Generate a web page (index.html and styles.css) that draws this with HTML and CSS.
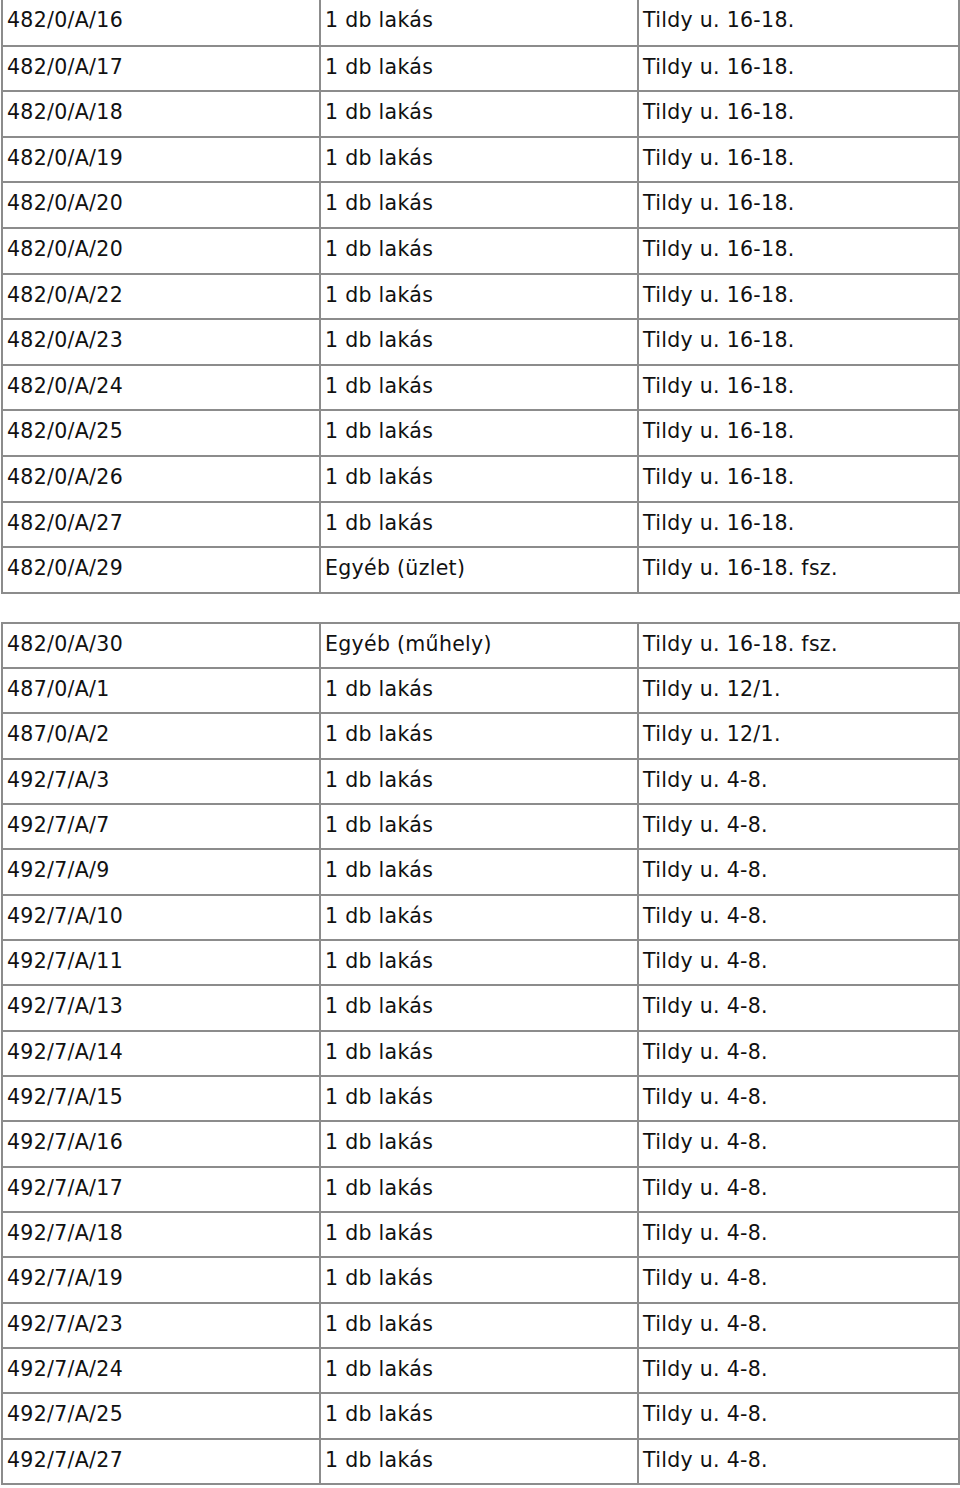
FILE: index.html
```html
<!DOCTYPE html>
<html lang="hu">
<head>
<meta charset="utf-8">
<title>Ingatlanok</title>
<link rel="stylesheet" href="styles.css">
</head>
<body>
<table class="list first">
<colgroup><col class="c1"><col class="c2"><col class="c3"></colgroup>
<tbody>
<tr><td>482/0/A/16</td><td>1 db lakás</td><td>Tildy u. 16-18.</td></tr>
<tr><td>482/0/A/17</td><td>1 db lakás</td><td>Tildy u. 16-18.</td></tr>
<tr><td>482/0/A/18</td><td>1 db lakás</td><td>Tildy u. 16-18.</td></tr>
<tr><td>482/0/A/19</td><td>1 db lakás</td><td>Tildy u. 16-18.</td></tr>
<tr><td>482/0/A/20</td><td>1 db lakás</td><td>Tildy u. 16-18.</td></tr>
<tr><td>482/0/A/20</td><td>1 db lakás</td><td>Tildy u. 16-18.</td></tr>
<tr><td>482/0/A/22</td><td>1 db lakás</td><td>Tildy u. 16-18.</td></tr>
<tr><td>482/0/A/23</td><td>1 db lakás</td><td>Tildy u. 16-18.</td></tr>
<tr><td>482/0/A/24</td><td>1 db lakás</td><td>Tildy u. 16-18.</td></tr>
<tr><td>482/0/A/25</td><td>1 db lakás</td><td>Tildy u. 16-18.</td></tr>
<tr><td>482/0/A/26</td><td>1 db lakás</td><td>Tildy u. 16-18.</td></tr>
<tr><td>482/0/A/27</td><td>1 db lakás</td><td>Tildy u. 16-18.</td></tr>
<tr><td>482/0/A/29</td><td>Egyéb (üzlet)</td><td>Tildy u. 16-18. fsz.</td></tr>
</tbody>
</table>
<table class="list second">
<colgroup><col class="c1"><col class="c2"><col class="c3"></colgroup>
<tbody>
<tr><td>482/0/A/30</td><td>Egyéb (műhely)</td><td>Tildy u. 16-18. fsz.</td></tr>
<tr><td>487/0/A/1</td><td>1 db lakás</td><td>Tildy u. 12/1.</td></tr>
<tr><td>487/0/A/2</td><td>1 db lakás</td><td>Tildy u. 12/1.</td></tr>
<tr><td>492/7/A/3</td><td>1 db lakás</td><td>Tildy u. 4-8.</td></tr>
<tr><td>492/7/A/7</td><td>1 db lakás</td><td>Tildy u. 4-8.</td></tr>
<tr><td>492/7/A/9</td><td>1 db lakás</td><td>Tildy u. 4-8.</td></tr>
<tr><td>492/7/A/10</td><td>1 db lakás</td><td>Tildy u. 4-8.</td></tr>
<tr><td>492/7/A/11</td><td>1 db lakás</td><td>Tildy u. 4-8.</td></tr>
<tr><td>492/7/A/13</td><td>1 db lakás</td><td>Tildy u. 4-8.</td></tr>
<tr><td>492/7/A/14</td><td>1 db lakás</td><td>Tildy u. 4-8.</td></tr>
<tr><td>492/7/A/15</td><td>1 db lakás</td><td>Tildy u. 4-8.</td></tr>
<tr><td>492/7/A/16</td><td>1 db lakás</td><td>Tildy u. 4-8.</td></tr>
<tr><td>492/7/A/17</td><td>1 db lakás</td><td>Tildy u. 4-8.</td></tr>
<tr><td>492/7/A/18</td><td>1 db lakás</td><td>Tildy u. 4-8.</td></tr>
<tr><td>492/7/A/19</td><td>1 db lakás</td><td>Tildy u. 4-8.</td></tr>
<tr><td>492/7/A/23</td><td>1 db lakás</td><td>Tildy u. 4-8.</td></tr>
<tr><td>492/7/A/24</td><td>1 db lakás</td><td>Tildy u. 4-8.</td></tr>
<tr><td>492/7/A/25</td><td>1 db lakás</td><td>Tildy u. 4-8.</td></tr>
<tr><td>492/7/A/27</td><td>1 db lakás</td><td>Tildy u. 4-8.</td></tr>
</tbody>
</table>
</body>
</html>
```
FILE: styles.css
```css
html, body {
  margin: 0;
  padding: 0;
  background: #fff;
}

body {
  font-family: "DejaVu Sans", Verdana, sans-serif;
  font-size: 20.5px;
  letter-spacing: 0.3px;
  color: #111;
  overflow: hidden;
}

.list {
  border-collapse: collapse;
  table-layout: fixed;
  width: 957px;
  margin-left: 1px;
}

.first {
  margin-top: 0;
}

.first tr:first-child td {
  border-top-style: hidden;
}

.second {
  margin-top: 28px;
}

.c1 { width: 318px; }
.c2 { width: 318px; }
.c3 { width: 321px; }

.list td {
  border: 2px solid #8c8c8c;
  box-sizing: border-box;
  padding: 8px 5px 0 4px;
  line-height: 24px;
  vertical-align: top;
  white-space: nowrap;
}

.first td {
  height: 45.6px;
}

.second td {
  height: 45.33px;
}
```
